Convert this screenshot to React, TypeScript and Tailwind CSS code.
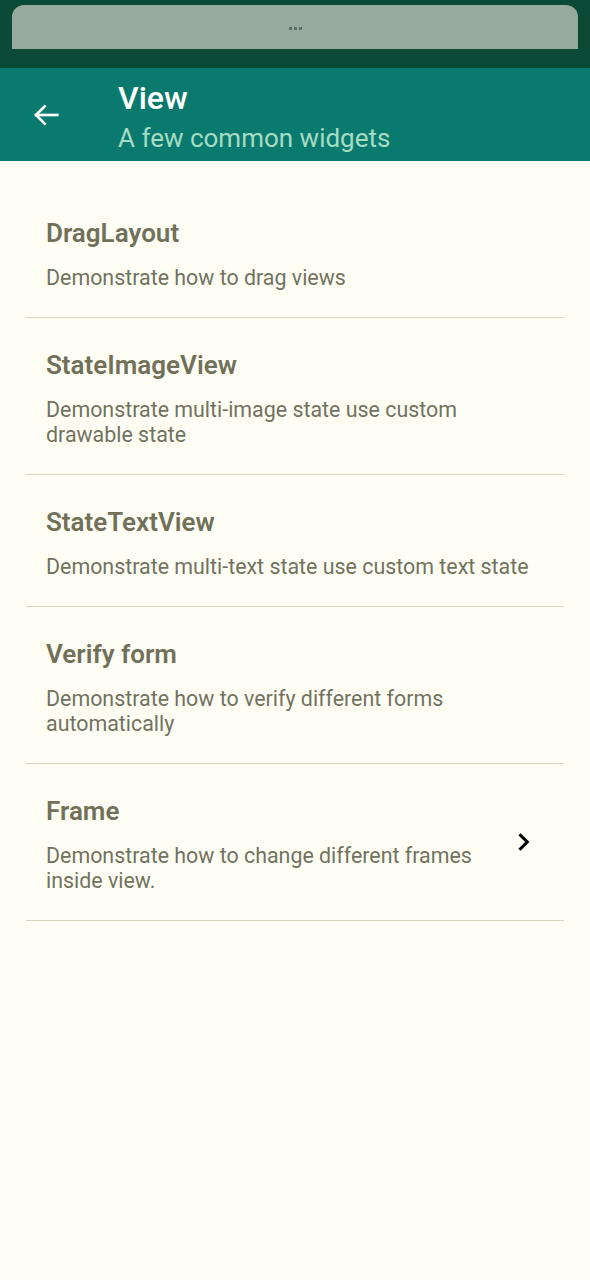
import React from "react";

const items = [
  { title: "DragLayout", desc: ["Demonstrate how to drag views"] },
  { title: "StateImageView", desc: ["Demonstrate multi-image state use custom", "drawable state"] },
  { title: "StateTextView", desc: ["Demonstrate multi-text state use custom text state"] },
  { title: "Verify form", desc: ["Demonstrate how to verify different forms", "automatically"] },
  { title: "Frame", desc: ["Demonstrate how to change different frames", "inside view."], chevron: true },
];

export default function App() {
  return (
    <div
      className="w-[590px] h-[1280px] bg-[#fefef5] flex flex-col overflow-hidden"
      style={{ fontFamily: "Roboto, 'Noto Sans', sans-serif" }}
    >
      <div className="h-[68px] bg-[#0b4a36] px-[12px] pt-[5px] shrink-0">
        <div className="h-[44px] bg-[#96ab9e] rounded-t-[12px] flex items-center justify-center">
          <div className="flex gap-[2px] mt-[2px]">
            <div className="w-[3px] h-[3px] bg-[#5d6e66]" />
            <div className="w-[3px] h-[3px] bg-[#5d6e66]" />
            <div className="w-[3px] h-[3px] bg-[#5d6e66]" />
          </div>
        </div>
      </div>
      <div className="h-[93px] bg-[#0a7a6e] flex items-start shrink-0">
        <div className="w-[118px] flex justify-center pr-[26px] pt-[31px]">
          <svg width="32" height="32" viewBox="0 0 24 24" fill="none" stroke="white" strokeWidth="2" strokeLinecap="square">
            <path d="M20.5 12H4.5" />
            <path d="M11 5.5L4.5 12L11 18.5" />
          </svg>
        </div>
        <div className="flex flex-col pt-[12px]">
          <div className="text-white text-[32px] font-medium leading-[36px]">View</div>
          <div className="text-[#a6dcc4] text-[26px] leading-[32px] mt-[6px]">A few common widgets</div>
        </div>
      </div>
      <div className="pt-[25px] flex flex-col">
        {items.map((it) => (
          <div key={it.title} className="mx-[26px] border-b border-[#d5d8bd] relative">
            <div className="pl-[20px] pt-[32px] pb-[27px]">
              <div className="text-[26px] font-semibold leading-[30px] text-[#71715a] whitespace-nowrap">{it.title}</div>
              <div className="mt-[17px] text-[21.4px] leading-[25px] text-[#727260] whitespace-nowrap">
                {it.desc.map((d) => (
                  <div key={d}>{d}</div>
                ))}
              </div>
            </div>
            {it.chevron && (
              <div className="absolute left-[491px] top-[68px]">
                <svg width="16" height="20" viewBox="0 0 14 18" fill="none" stroke="black" strokeWidth="2.8" strokeLinecap="square">
                  <path d="M3 3L9 9L3 15" />
                </svg>
              </div>
            )}
          </div>
        ))}
      </div>
    </div>
  );
}
